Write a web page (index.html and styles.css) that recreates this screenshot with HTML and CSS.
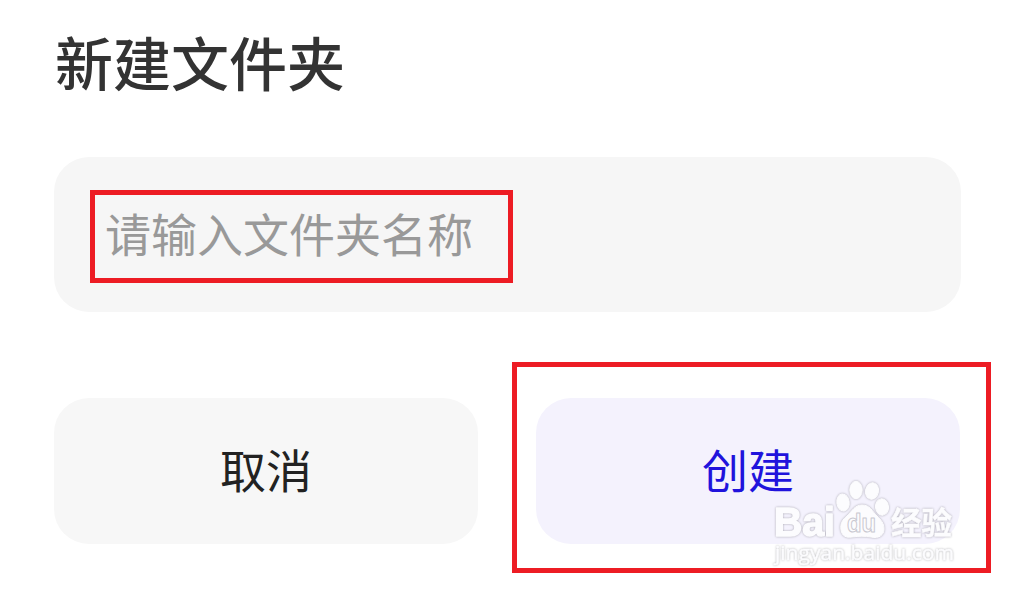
FILE: index.html
```
<!DOCTYPE html>
<html lang="zh-CN">
<head>
    <meta charset="UTF-8">
    <meta name="viewport" content="width=device-width, initial-scale=1.0">
    <title>新建文件夹</title>
    <link rel="stylesheet" href="styles.css">
</head>
<body>
    <div class="dialog">
        <h2>新建文件夹</h2>
        <div class="field">
            <span class="placeholder">请输入文件夹名称</span>
            <div class="mark mark-field"></div>
        </div>
        <div class="actions">
            <button class="cancel">取消</button>
            <button class="create">创建</button>
            <div class="mark mark-create"></div>
        </div>
    </div>

    <svg class="watermark" width="190" height="94" viewBox="0 0 190 94">
        <g class="logo">
            <text class="latin" x="4" y="61" textLength="61" lengthAdjust="spacingAndGlyphs">Bai</text>
            <ellipse cx="73" cy="27.5" rx="6.2" ry="8.5" transform="rotate(-8 73 27.5)"/>
            <ellipse cx="86" cy="15" rx="6.2" ry="8.7"/>
            <ellipse cx="102" cy="16" rx="6.5" ry="8.3" transform="rotate(12 102 16)"/>
            <ellipse cx="112" cy="32" rx="6.5" ry="8.2" transform="rotate(-8 112 32)"/>
            <path d="M92 30C85 30 82 36 77 41C72 45 70 49 71 55C72 61 76 63 82 62C89 61 95 61 101 62C109 64 114 60 114 54C114 48 111 45 107 41C102 36 100 30 92 30Z"/>
        </g>
        <text class="du" x="77" y="57" textLength="29" lengthAdjust="spacingAndGlyphs">du</text>
        <text class="cn logo" x="121" y="59" textLength="61" lengthAdjust="spacingAndGlyphs">经验</text>
        <text class="site logo" x="5" y="85" textLength="179" lengthAdjust="spacingAndGlyphs">jingyan.baidu.com</text>
    </svg>
</body>
</html>
```
FILE: styles.css
```
* {
    box-sizing: border-box;
}
body {
    margin: 0;
    height: 589px;
    overflow: hidden;
    background-color: #fff;
    font-family: "Noto Sans CJK SC", sans-serif;
}
.dialog {
    width: 907px;
    margin-left: 54px;
    padding-top: 21px;
}
h2 {
    margin: 0 0 56px;
    padding-left: 1px;
    height: 80px;
    line-height: 80px;
    font-size: 58px;
    font-weight: 500;
    color: #333;
}
.field {
    position: relative;
    display: flex;
    align-items: center;
    height: 155px;
    padding-left: 51px;
    padding-bottom: 5px;
    border-radius: 35px;
    background-color: #f6f6f6;
}
.placeholder {
    font-size: 46px;
    line-height: 60px;
    font-weight: 400;
    color: #999;
}
.actions {
    position: relative;
    display: flex;
    gap: 58px;
    margin-top: 86px;
}
.actions button {
    width: 424px;
    height: 146px;
    padding: 0 0 6px;
    border: none;
    border-radius: 35px;
    font-family: inherit;
    font-size: 46px;
    font-weight: 400;
    cursor: pointer;
}
.actions .cancel {
    background-color: #f7f7f7;
    color: #222;
}
.actions .create {
    background-color: #f4f2fd;
    color: #2013dc;
}
.mark {
    position: absolute;
    border: 5px solid #ed1c24;
}
.mark-field {
    left: 36px;
    top: 33px;
    width: 423px;
    height: 93px;
}
.mark-create {
    left: 458px;
    top: -36px;
    width: 479px;
    height: 211px;
}
.watermark {
    position: absolute;
    left: 770px;
    top: 475px;
    stroke-linejoin: round;
}
.logo {
    fill: #fcfcfe;
    stroke: #fcfcfe;
    stroke-width: 1px;
    filter: drop-shadow(0 0 1px #aaa8b2);
}
.latin, .du {
    font-family: "Liberation Sans", sans-serif;
    font-weight: bold;
}
.latin {
    font-size: 40px;
    stroke-width: 1.5px;
}
.du {
    font-size: 25px;
    fill: #fcfcfe;
    stroke: #c9c8d0;
    stroke-width: 1px;
}
.cn {
    font-size: 31px;
    font-weight: 700;
    stroke-width: 0.5px;
}
.site {
    font-family: "Open Sans", "Noto Sans", sans-serif;
    font-size: 20px;
    stroke-width: 0.5px;
    filter: drop-shadow(0 0 1px #b8b8bb);
}
```
